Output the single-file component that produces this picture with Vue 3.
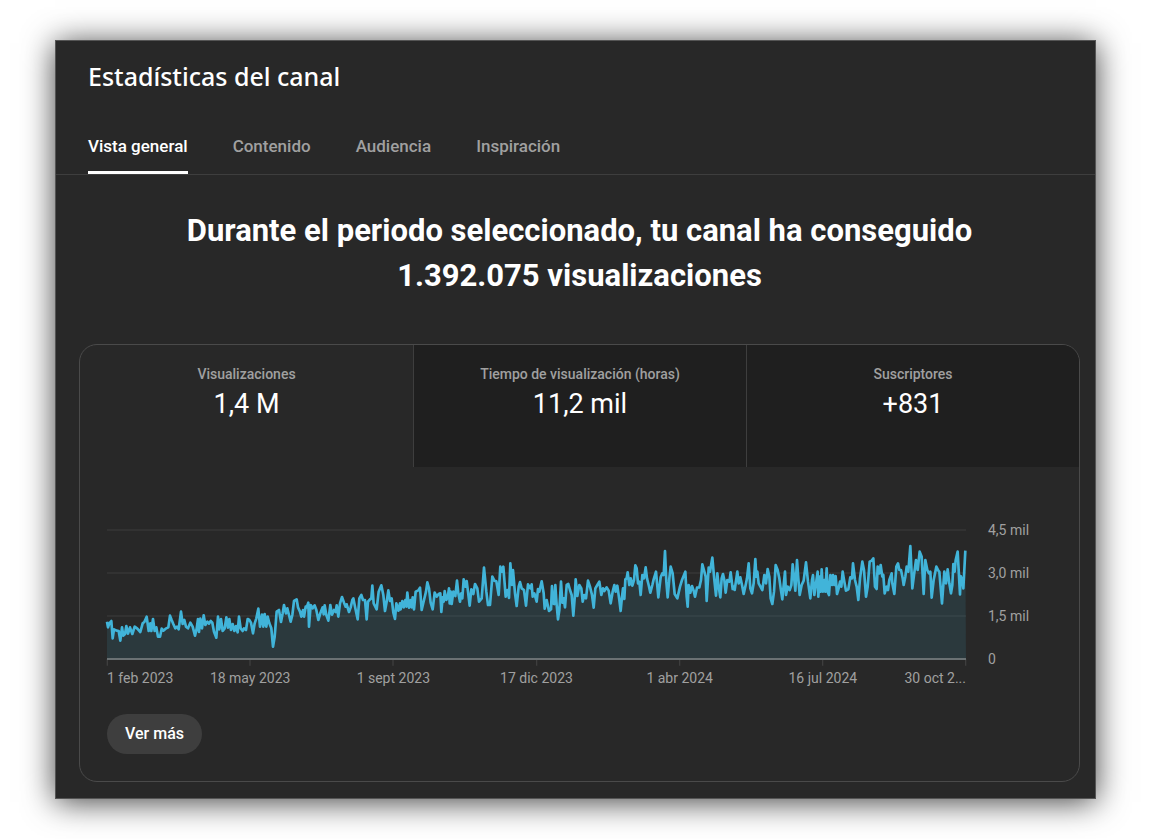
<script setup>
import { ref } from 'vue'

const tabs = ['Vista general', 'Contenido', 'Audiencia', 'Inspiración']
const activeTab = ref(tabs[0])

const metrics = [
  { label: 'Visualizaciones', value: '1,4 M' },
  { label: 'Tiempo de visualización (horas)', value: '11,2 mil' },
  { label: 'Suscriptores', value: '+831' },
]
const activeMetric = ref(metrics[0].label)

const scale = ['4,5 mil', '3,0 mil', '1,5 mil', '0']
const dates = ['1 feb 2023', '18 may 2023', '1 sept 2023', '17 dic 2023', '1 abr 2024', '16 jul 2024', '30 oct 2...']
const ticks = [1, 429, 858, 1289, 1718, 2147, 2576]
const gridLines = [30, 159, 288]

// Each stretch of the series holds x,y pairs that start at its own origin.
const stretches = [
  {
    origin: -21,
    points: '21,305 24,322 28,310 34,303 38,355 42,328 50,332 56,333 61,362 66,322 70,347 75,342 79,318 84,341 90,322 97,342 104,320 112,326 121,336 128,310 133,306 140,290 146,333 151,310 154,333 159,297 164,333 169,322 174,350 180,350 185,326 190,332 197,326 205,322 210,287 215,300 220,312 226,325 231,320 236,328 243,275 248,312 253,300 258,320 264,325 271,308 278,320 285,347 290,326 294,297 297,336 301,296 306,325 311,286 316,315 322,305 327,311 332,303 337,308 342,335 349,353 354,290 358,328 363,297 368,333 374,325 379,292 384,323 388,297 393,330 398,312 403,333 408,318 413,337 417,290 422,325 428,333 432,325 438,330 443,297 448,300 453,308 459,340 464,310 469,295 475,266 480,320 486,284 490,320 494,282 499,320 503,290 508,310 514,325 519,380 524,350 530,275 537,270 543,306 548,280 552,255 558,280 562,265 567,285 572,305 577,285 582,243 590,238 594,262 600,275 604,290 609,270 612,290 617,260 620,262 625,248 627,320',
  },
  {
    origin: 609,
    points: '2,255 8,265 14,256 19,270 25,300 31,280 38,262 41,283 44,256 49,285 55,302 61,255 66,284 72,270 77,276 80,256 85,290 90,250 96,231 102,248 107,260 110,253 117,276 122,262 127,240 130,235 136,265 143,298 148,235 154,225 159,240 165,240 170,298 174,245 180,238 184,235 187,197 191,250 200,268 206,215 214,196 220,225 225,273 230,245 235,211 240,243 245,235 250,278 255,297 259,250 265,272 270,250 272,268 277,243 281,262 286,240 289,260 292,218 297,263 302,240 305,262 308,232 312,268 317,215 325,211 330,203 335,270 342,240 348,215 352,187 357,205 362,248 368,268 374,218 380,230 386,222 391,220 394,276 398,232 401,245 404,213 409,240 413,232 417,205 419,250 422,215 425,252 430,215 436,228 441,182 445,220 450,245 454,220 457,235 461,178 466,200 470,183 474,215 479,257 484,208 490,222 495,192 502,205 507,245 515,235 522,143 529,215 534,255 540,255 547,170 553,182 559,184 566,225 571,140 576,155 580,140 587,230 592,210 597,234 601,130 606,195 609,150 615,220 620,258 626,200',
  },
  {
    origin: 1239,
    points: '0,186 5,205 12,210 18,257 24,193 31,205 35,193 38,230 43,220 50,245 54,207 58,215 65,184 71,220 74,266 80,240 87,273 93,268 96,198 99,250 103,252 106,195 110,255 114,298 118,270 123,185 127,248 131,235 135,262 140,195 145,192 150,210 155,225 160,287 164,235 167,178 172,228 178,195 184,205 188,245 193,225 198,235 204,182 210,200 216,225 221,263 226,205 232,195 238,185 244,225 249,205 253,213 260,202 266,212 272,250 278,215 283,195 287,215 292,197 298,240 302,273 306,230 309,205 313,237 316,178 320,175 323,157 328,195 332,175 337,197 342,180 346,136 350,145 354,190 358,185 362,225 367,165 372,175 377,142 381,175 386,195 391,218 397,195 401,178 408,155 415,232 422,172 427,160 431,165 435,93 439,185 443,232 448,175 452,140 458,160 464,222 472,235 480,200 486,180 496,155 500,230 503,260 506,195 511,218 516,198 521,212 525,230 531,203 538,202 543,180 547,133 553,155 557,170 560,243 566,143 570,155 577,113 583,180 588,227 592,160 596,200 601,232 605,175 609,162 613,180 617,218 622,180 628,185',
  },
  {
    origin: 1869,
    points: '2,157 8,207 12,200 14,210 22,155 26,190 31,172 36,195 41,222 47,195 51,175 56,130 61,205 66,220 71,190 76,117 79,170 82,155 86,190 97,210 103,165 108,190 113,147 118,170 122,235 127,252 132,215 137,135 143,150 148,175 152,205 157,238 161,195 165,155 168,225 173,200 179,210 184,195 188,133 193,180 196,212 201,120 205,175 209,225 215,195 221,182 228,127 234,185 241,235 246,180 249,165 253,225 258,190 263,155 265,230 269,170 272,215 275,148 279,215 283,180 286,215 290,145 293,215 297,225 301,165 306,195 309,165 313,195 317,168 321,222 326,205 330,185 334,200 338,155 343,185 348,212 355,208 361,172 366,175 369,130 375,180 380,200 385,240 390,175 397,125 402,150 408,230 413,200 419,125 425,122 430,115 435,200 440,207 443,140 448,160 452,135 457,170 460,165 464,220 470,200 474,210 478,180 485,160 487,190 493,222 499,140 504,130 508,150 513,150 518,175 521,195 526,170 530,140 535,155 541,78 547,205 552,165 558,120 563,150 569,95 575,110 581,222 586,120 592,150 597,160 601,155 605,233 611,180 619,140 625,152 628,155 636,250 643,155 648,190 653,148 658,190 663,220 667,195 670,132 674,155 677,120 683,95 690,223 692,168 697,180 700,205 706,92',
  },
]

const line = stretches
  .flatMap(({ origin, points }) =>
    points.split(' ').map((pair) => {
      const [x, y] = pair.split(',').map(Number)
      return `${x + origin},${y}`
    }),
  )
  .join(' ')
const area = `0,417 ${line} 2577,417`
</script>

<template>
  <main class="panel">
    <h1 class="title">Estadísticas del canal</h1>

    <nav class="tabs" role="tablist" aria-label="Secciones">
      <button
        v-for="tab in tabs"
        :key="tab"
        type="button"
        role="tab"
        class="tab"
        :class="{ active: tab === activeTab }"
        :aria-selected="tab === activeTab"
        @click="activeTab = tab"
      >{{ tab }}</button>
    </nav>

    <div class="content">
      <h2 class="headline">Durante el periodo seleccionado, tu canal ha conseguido 1.392.075 visualizaciones</h2>

      <section class="card">
        <div class="metrics" role="tablist" aria-label="Métricas">
          <button
            v-for="metric in metrics"
            :key="metric.label"
            type="button"
            role="tab"
            class="metric"
            :class="{ active: metric.label === activeMetric }"
            :aria-selected="metric.label === activeMetric"
            @click="activeMetric = metric.label"
          >
            <span class="metric-label">{{ metric.label }}</span>
            <span class="metric-value">{{ metric.value }}</span>
          </button>
        </div>

        <div class="chart">
          <div class="plot">
            <svg class="graph" viewBox="0 27 2577 411" preserveAspectRatio="none" aria-hidden="true">
              <line v-for="y in gridLines" :key="y" class="grid" x1="0" :y1="y" x2="2577" :y2="y" />
              <line v-for="x in ticks" :key="x" class="tick" :x1="x" y1="417" :x2="x" y2="437" />
              <polygon class="area" :points="area" />
              <polyline class="series" :points="line" />
              <line class="base" x1="0" y1="417" x2="2577" y2="417" />
            </svg>
            <div class="dates">
              <span v-for="date in dates" :key="date" class="date">{{ date }}</span>
            </div>
          </div>
          <div class="scale">
            <span v-for="step in scale" :key="step">{{ step }}</span>
          </div>
        </div>

        <button type="button" class="more">Ver más</button>
      </section>
    </div>
  </main>
</template>

<style>
body {
  background: #fff;
}
</style>

<style scoped>
.panel {
  box-sizing: border-box;
  margin: 40px 55px;
  border: 1px solid #555;
  background: #282828;
  box-shadow: 0 3px 30px rgba(0, 0, 0, 0.75);
  color: #fff;
  font-family: Roboto, "Liberation Sans", sans-serif;
}

button {
  margin: 0;
  border: 0;
  font: inherit;
  cursor: pointer;
}

.title {
  margin: 0;
  padding: 19px 32px 0;
  font: 500 25px/32px "Noto Sans", sans-serif;
}

.tabs {
  display: flex;
  gap: 45px;
  margin-top: 33px;
  padding: 0 32px;
  border-bottom: 1px solid #3e3e3e;
}

.tab {
  padding: 12px 0 15px;
  border-bottom: 3px solid transparent;
  background: none;
  color: #a0a0a0;
  font-size: 17px;
  font-weight: 500;
  line-height: 19px;
}

.tab.active {
  border-color: #fff;
  color: #fff;
}

.content {
  padding: 33px 15px 16px 23px;
}

.headline {
  max-width: 800px;
  margin: 0 auto;
  font-size: 31px;
  font-weight: 700;
  line-height: 45px;
  text-align: center;
}

.card {
  margin-top: 46px;
  padding-bottom: 27px;
  border: 1px solid #4a4a4a;
  border-radius: 18px;
  overflow: hidden;
}

.metrics {
  display: grid;
  grid-template-columns: repeat(3, 1fr);
}

.metric {
  display: flex;
  flex-direction: column;
  align-items: center;
  padding: 20px 0 42px;
  border-left: 1px solid #3e3e3e;
  background: #1f1f1f;
  color: #fff;
}

.metric:first-child {
  border-left: 0;
}

.metric.active {
  background: none;
}

.metric-label {
  color: #a0a0a0;
  font-size: 14px;
  font-weight: 500;
  line-height: 18px;
}

.metric-value {
  font-size: 27px;
  line-height: 42px;
}

.chart {
  display: flex;
  gap: 22px;
  margin-top: 62px;
  padding: 0 27px;
  color: #a0a0a0;
  font-size: 14px;
  line-height: 18px;
}

.plot {
  flex: 1;
}

.graph {
  display: block;
  width: 100%;
  height: 137px;
  overflow: visible;
}

.graph * {
  fill: none;
}

.graph .grid {
  stroke: #363636;
  stroke-width: 5;
}

.graph .tick {
  stroke: #3e3e3e;
  stroke-width: 4;
}

.graph .area {
  fill: rgba(65, 180, 217, 0.12);
}

.graph .series {
  stroke: #41b4d9;
  stroke-width: 8;
  stroke-linejoin: round;
}

.graph .base {
  stroke: #6a7173;
  stroke-width: 6;
}

.dates {
  display: grid;
  grid-template-columns: repeat(12, 1fr);
  margin-top: 3px;
}

.date {
  grid-column: span 2;
  text-align: center;
  white-space: nowrap;
}

.date:first-child {
  grid-column: span 1;
  text-align: left;
}

.date:last-child {
  grid-column: span 1;
  text-align: right;
}

.scale {
  display: flex;
  flex-direction: column;
  gap: 25px;
  width: 64px;
  margin-top: -8px;
}

.more {
  display: block;
  margin: 27px 0 0 27px;
  padding: 10px 18px;
  border-radius: 20px;
  background: #3e3e3e;
  color: #fff;
  font-size: 16px;
  font-weight: 500;
  line-height: 20px;
}
</style>
